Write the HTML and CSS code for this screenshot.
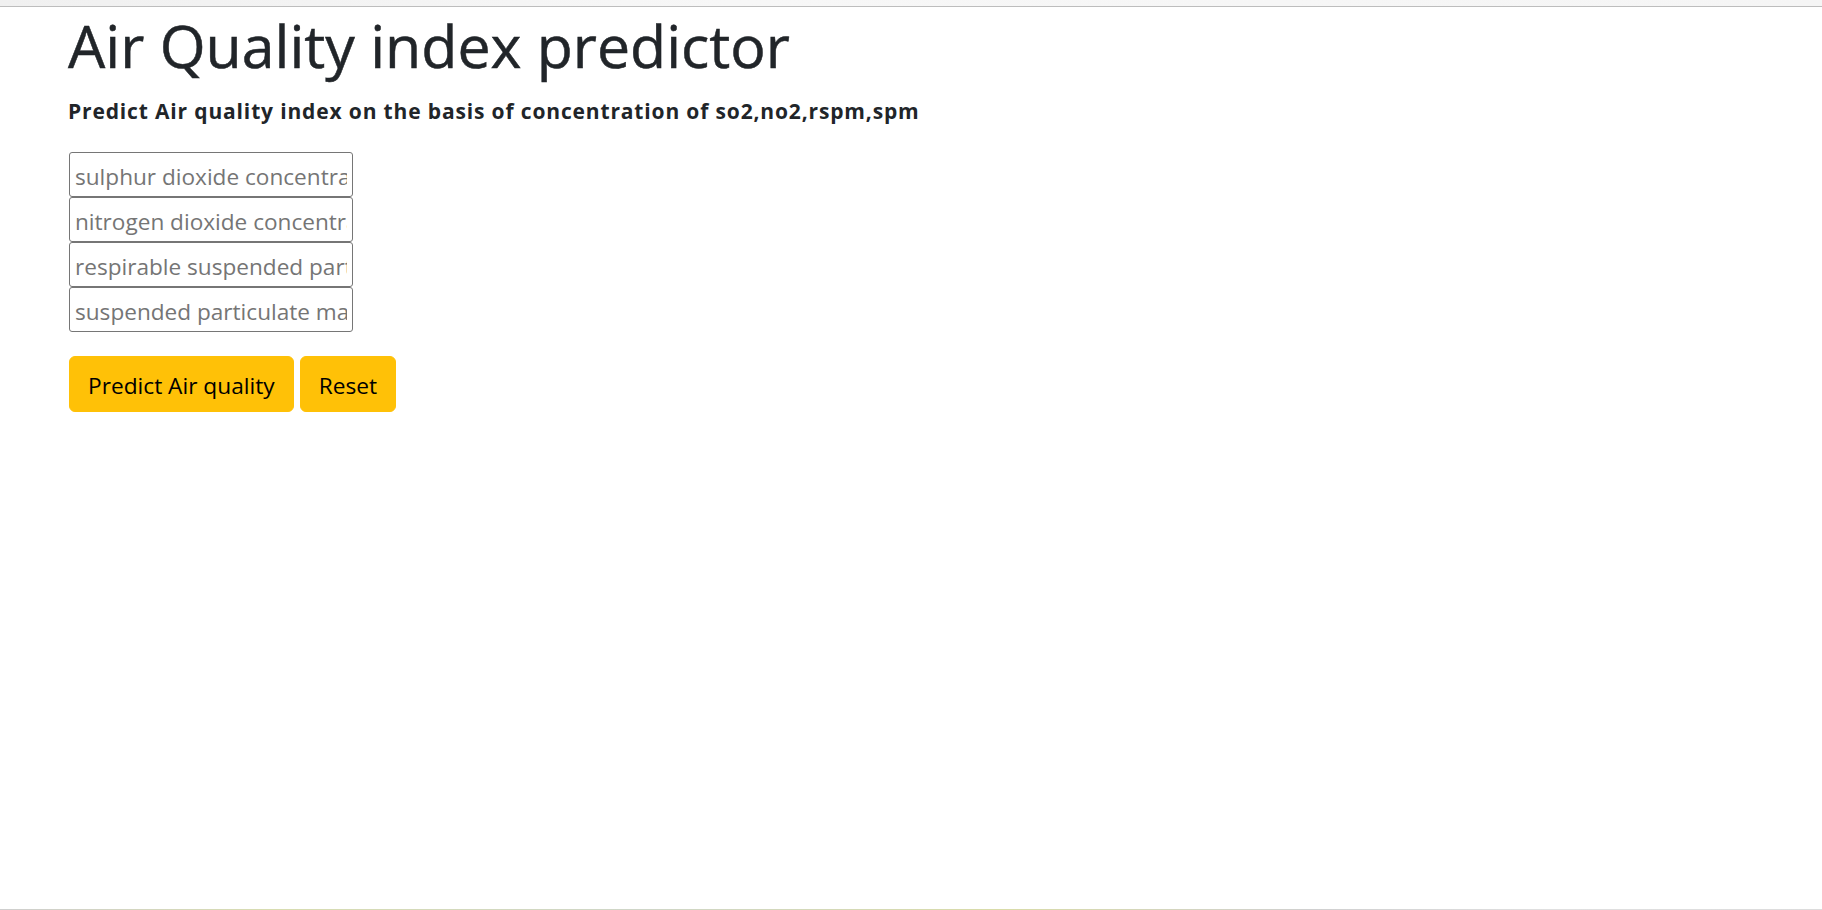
FILE: index.html
```html
<!DOCTYPE html>
<html lang="en">
<head>
<meta charset="utf-8">
<title>Air Quality index predictor</title>
<link rel="stylesheet" href="styles.css">
</head>
<body>
<div class="chrome-top"></div>
<main class="page">
  <h1 class="title">Air Quality index predictor</h1>
  <h6 class="subtitle">Predict Air quality index on the basis of concentration of so2,no2,rspm,spm</h6>
  <form class="form">
    <div class="fields">
      <input class="field" type="text" placeholder="sulphur dioxide concentration">
      <input class="field" type="text" placeholder="nitrogen dioxide concentration">
      <input class="field" type="text" placeholder="respirable suspended particulate matter">
      <input class="field" type="text" placeholder="suspended particulate matter">
    </div>
    <div class="actions">
      <button class="btn" type="submit">Predict Air quality</button>
      <button class="btn" type="reset">Reset</button>
    </div>
  </form>
</main>
<div class="chrome-bottom"></div>
</body>
</html>
```
FILE: styles.css
```css
* { box-sizing: border-box; }

html, body {
  margin: 0;
  padding: 0;
  background: #ffffff;
}

body {
  min-height: 910px;
  display: flex;
  flex-direction: column;
  font-family: "Open Sans", "Noto Sans", sans-serif;
  color: #212529;
}

.chrome-top {
  height: 7px;
  background: linear-gradient(to right, #f0f0f0, #f7f7f7 40%, #f5f5f5);
  border-bottom: 1px solid #bdbdbd;
  flex: none;
}

.page {
  flex: 1;
  padding: 2px 0 0 68px;
}

.title {
  margin: 0 0 15px 0;
  font-size: 59px;
  line-height: 72px;
  font-weight: 500;
  -webkit-text-stroke: 0.5px #212529;
  color: #212529;
}

.subtitle {
  margin: 0;
  font-size: 21px;
  line-height: 30px;
  letter-spacing: 0.85px;
  font-weight: 700;
  color: #212529;
}

.form {
  margin-top: 26px;
}

.fields {
  display: flex;
  flex-direction: column;
  align-items: flex-start;
}

.field {
  width: 284px;
  height: 45px;
  margin: 0 0 0 1px;
  padding: 5px 5px 1px 5px;
  border: 1px solid #767676;
  border-radius: 3px;
  font-family: "Open Sans", "Noto Sans", sans-serif;
  font-size: 22.6px;
  line-height: 36px;
  color: #212529;
  background: #fff;
  outline: none;
}

.field::placeholder {
  color: #757575;
  opacity: 1;
}

.actions {
  display: flex;
  gap: 6px;
  margin-top: 24px;
  padding-left: 1px;
}

.btn {
  height: 56px;
  padding: 11px 18px 7px 18px;
  border: 1px solid #ffc107;
  border-radius: 6px;
  background: #ffc107;
  color: #000;
  font-family: "Open Sans", "Noto Sans", sans-serif;
  font-size: 22.7px;
  line-height: 36px;
  cursor: pointer;
}

.chrome-bottom {
  height: 1px;
  flex: none;
  background: linear-gradient(to right, #cfcfcf, #d8ddb0 15%, #cfd6c8 35%, #d9dca8 55%, #d0d0d0 72%, #e0e0e0 85%, #dcdcdc);
}
```
